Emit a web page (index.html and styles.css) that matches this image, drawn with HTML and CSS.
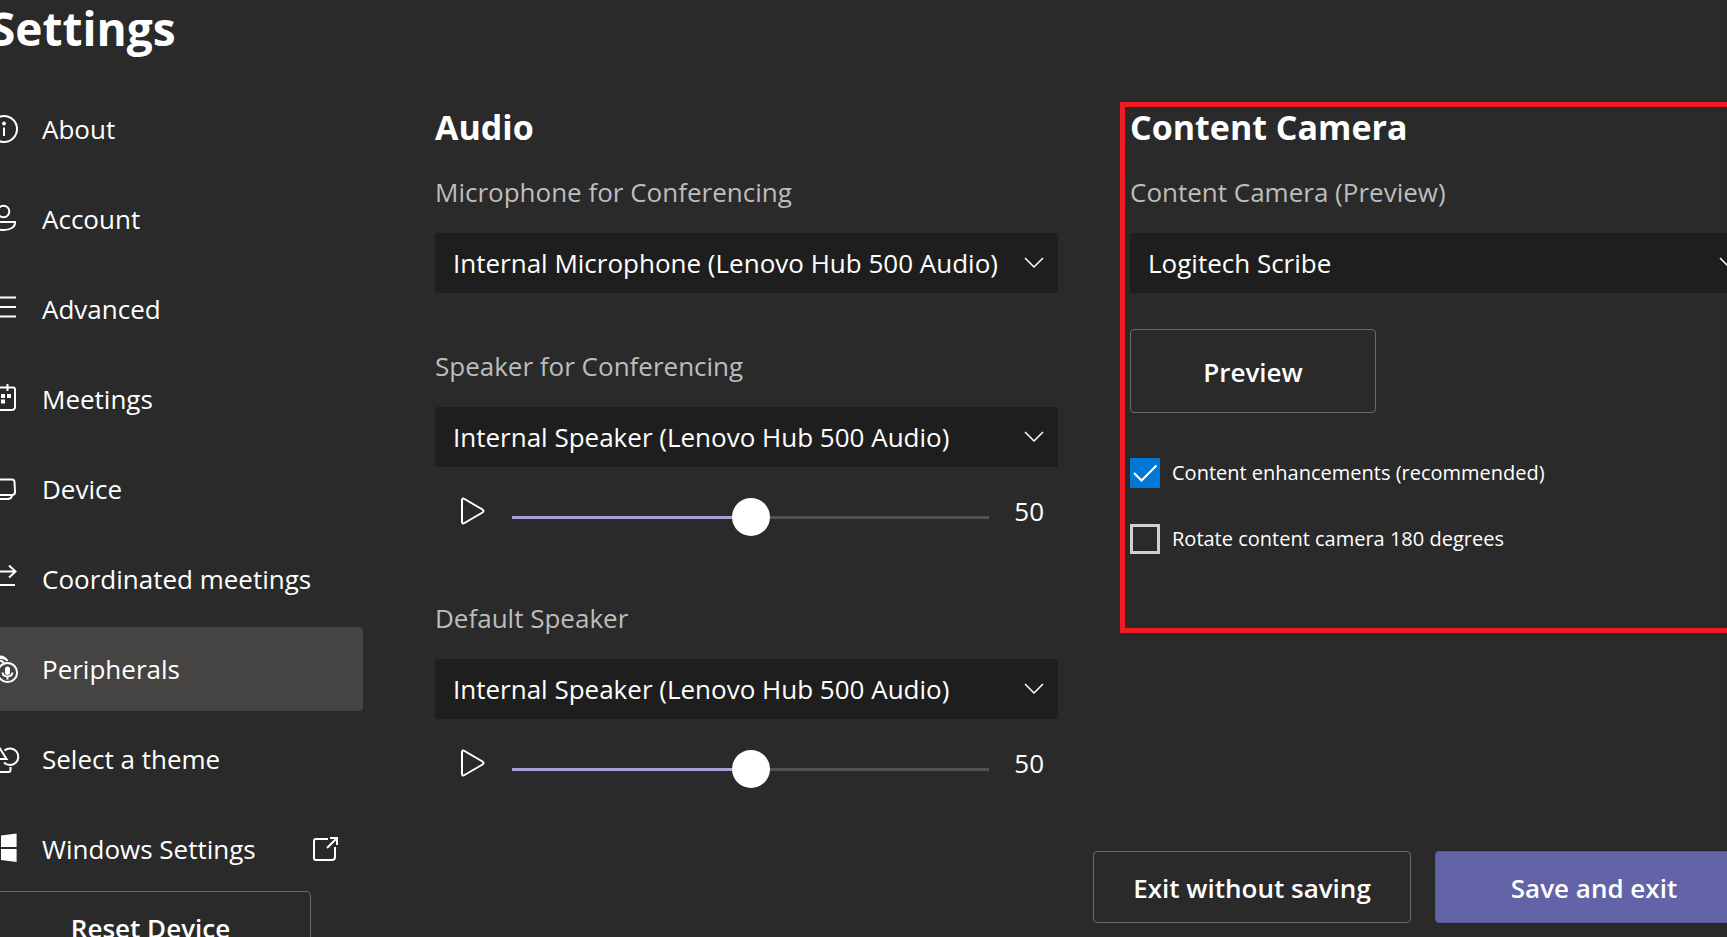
FILE: index.html
```html
<!DOCTYPE html>
<html lang="en">
<head>
<meta charset="utf-8">
<title>Settings</title>
<link rel="stylesheet" href="styles.css">
</head>
<body>
<div class="app">
  <aside class="sidebar">
    <h1 class="page-title">Settings</h1>
    <nav class="nav">
      <a class="nav-item" href="#about"><svg class="icon" viewBox="0 0 28 28"><circle cx="14" cy="14" r="13"/><path d="M14 12.500V21"/><circle class="solid" cx="14" cy="8.500" r="1.900"/></svg>About</a>
      <a class="nav-item" href="#account"><svg class="icon" viewBox="0 0 28 28"><circle cx="13.500" cy="6.500" r="5.800"/><path d="M2 17H25V18C25 22 20.500 25 13.500 25S2 22 2 18Z"/></svg>Account</a>
      <a class="nav-item" href="#advanced"><svg class="icon" viewBox="0 0 28 28"><path d="M1 2.500H26M1 12H26M1 21.500H26"/></svg>Advanced</a>
      <a class="nav-item" href="#meetings"><svg class="icon" viewBox="0 0 28 28"><path d="M4 2.500H23Q25 2.500 25 4.500V22Q25 25 21 25H5Q2 25 2 22V4.500Q2 2.500 4 2.500ZM17.500-1V6M8.500-1V6"/><path class="solid" d="M11 9H15V13H11ZM17 9H21V13H17ZM11 14.500H15V18.500H11ZM5 9H9V13H5ZM5 14.500H9V18.500H5Z"/></svg>Meetings</a>
      <a class="nav-item" href="#device"><svg class="icon" viewBox="0 0 28 28"><path d="M3 4.500H22Q24.500 4.500 24.500 7L25 17Q25 20 22 20H3Q1 20 1 18V7Q1 4.500 3 4.500ZM22 20Q22 24 17 24H4"/></svg>Device</a>
      <a class="nav-item" href="#coordinated"><svg class="icon" viewBox="0 0 28 28"><path d="M1 6.500H25M19 .5L25.500 6.500L19 12.500M25 20H1M7 14L1 20L7 26"/></svg>Coordinated meetings</a>
      <a class="nav-item nav-item-active" href="#peripherals" aria-current="page"><svg class="icon" viewBox="0 0 28 28"><circle cx="17.500" cy="17.500" r="9.600"/><path d="M1 12A10 10 0 0 1 17.500 5.500M7 2A9.500 9.500 0 0 1 17.500 6M10 5.500L14 7.500M12.500 17.500Q13 21.500 17.500 21.500T22.500 17.500M17.500 21.500V24.500"/><rect class="solid" x="15" y="11.500" width="5" height="8.500" rx="2.500"/></svg>Peripherals</a>
      <a class="nav-item" href="#theme"><svg class="icon" viewBox="0 0 28 28"><path d="M14.500 5.500A8.300 8.300 0 1 1 14 17.500M9 2L16.500 14H1.500ZM20.500 22V25Q20.500 27 18.500 27H6V18"/></svg>Select a theme</a>
      <a class="nav-item" href="#windows"><svg class="icon" viewBox="0 0 28 28"><path class="solid" d="M11 .5L26.600-1.500V12H11ZM11 14H26.600V27L11 25ZM0 2L9 1V12H0ZM0 14H9V25L0 24Z"/></svg>Windows Settings<svg class="icon icon-external" viewBox="0 0 28 28"><path d="M17 4H5Q3 4 3 6V23Q3 25 5 25H21Q24 25 24 22V12M16 13L26 3M19 3H26V10"/></svg></a>
    </nav>
    <button class="button button-reset" type="button">Reset Device</button>
  </aside>

  <main class="main">
    <div class="columns">
      <section class="panel">
        <h2 class="panel-title">Audio</h2>
        <div class="group">
          <label class="label" for="mic">Microphone for Conferencing</label>
          <div class="select-box">
            <select class="select" id="mic"><option>Internal Microphone (Lenovo Hub 500 Audio)</option></select>
            <svg class="chevron" viewBox="0 0 20 12"><path d="M1 1L10 10L19 1"/></svg>
          </div>
        </div>
        <div class="group">
          <label class="label" for="speaker">Speaker for Conferencing</label>
          <div class="select-box">
            <select class="select" id="speaker"><option>Internal Speaker (Lenovo Hub 500 Audio)</option></select>
            <svg class="chevron" viewBox="0 0 20 12"><path d="M1 1L10 10L19 1"/></svg>
          </div>
          <div class="volume">
            <button class="play" type="button" aria-label="Test speaker"><svg class="icon-play" viewBox="0 0 26 28"><path d="M2 3.500Q2 .500 4.500 2L22.500 12.500Q24.500 14 22.500 15.500L4.500 26Q2 27.500 2 24.500Z"/></svg></button>
            <input class="slider" type="range" min="0" max="100" value="50" id="speaker-volume" aria-label="Speaker volume">
            <output class="value" for="speaker-volume">50</output>
          </div>
        </div>
        <div class="group">
          <label class="label" for="default">Default Speaker</label>
          <div class="select-box">
            <select class="select" id="default"><option>Internal Speaker (Lenovo Hub 500 Audio)</option></select>
            <svg class="chevron" viewBox="0 0 20 12"><path d="M1 1L10 10L19 1"/></svg>
          </div>
          <div class="volume">
            <button class="play" type="button" aria-label="Test default speaker"><svg class="icon-play" viewBox="0 0 26 28"><path d="M2 3.500Q2 .500 4.500 2L22.500 12.500Q24.500 14 22.500 15.500L4.500 26Q2 27.500 2 24.500Z"/></svg></button>
            <input class="slider" type="range" min="0" max="100" value="50" id="default-volume" aria-label="Default speaker volume">
            <output class="value" for="default-volume">50</output>
          </div>
        </div>
      </section>

      <section class="panel panel-marked">
        <h2 class="panel-title">Content Camera</h2>
        <div class="group">
          <label class="label" for="camera">Content Camera (Preview)</label>
          <div class="select-box">
            <select class="select" id="camera"><option>Logitech Scribe</option></select>
            <svg class="chevron" viewBox="0 0 20 12"><path d="M1 1L10 10L19 1"/></svg>
          </div>
        </div>
        <button class="button button-preview" type="button">Preview</button>
        <div class="checks">
          <label class="check"><span class="check-box"><input class="check-input" type="checkbox" checked><svg class="tick" viewBox="0 0 30 30"><path d="M4 15L11.500 22.500L26.500 7.500"/></svg></span>Content enhancements (recommended)</label>
          <label class="check"><span class="check-box"><input class="check-input" type="checkbox"><svg class="tick" viewBox="0 0 30 30"><path d="M4 15L11.500 22.500L26.500 7.500"/></svg></span>Rotate content camera 180 degrees</label>
        </div>
      </section>
    </div>
    <footer class="footer">
      <button class="button button-footer" type="button">Exit without saving</button>
      <button class="button button-footer button-primary" type="submit">Save and exit</button>
    </footer>
  </main>
</div>
</body>
</html>
```

FILE: styles.css
```css
* {
  box-sizing: border-box;
}

body {
  margin: 0;
  height: 100vh;
  overflow: hidden;
  background: #2a2a2a;
  color: #fff;
  font: 26px/36px "Open Sans", "Noto Sans", sans-serif;
}

/* The window is slightly narrower than the panel it shows. */
.app {
  display: flex;
  gap: 72px;
  height: 100vh;
  margin: 0 -26px 0 -10px;
}

.sidebar {
  flex: 0 0 373px;
}

.page-title {
  margin: 0;
  height: 84px;
  font-size: 46px;
  font-weight: 700;
  line-height: 56px;
}

.nav {
  display: flex;
  flex-direction: column;
  gap: 6px;
  padding-top: 3px;
}

.nav-item {
  display: flex;
  align-items: center;
  gap: 24px;
  height: 84px;
  border-radius: 4px;
  color: #fff;
  line-height: 38px;
  text-decoration: none;
}

.nav-item-active {
  background: #454442;
}

.icon {
  flex: none;
  width: 28px;
  height: 28px;
  overflow: visible;
  fill: none;
  stroke: #fff;
  stroke-width: 2;
}

.icon .solid {
  fill: #fff;
  stroke: none;
}

.icon-external {
  margin-left: auto;
  margin-right: 24px;
}

.button {
  display: block;
  height: 72px;
  padding: 2px 16px 0;
  border: 1px solid #6a6a6a;
  border-radius: 4px;
  background: transparent;
  color: #fff;
  font: inherit;
  font-weight: 600;
}

.button-reset {
  width: 321px;
}

.main {
  display: flex;
  flex: 1;
  flex-direction: column;
  min-width: 0;
  padding: 102px 0 14px;
}

.columns {
  display: grid;
  grid-template-columns: 1fr 1fr;
  gap: 72px;
  align-items: start;
}

.panel {
  padding-top: 2px;
  min-width: 0;
}

.panel-marked {
  margin: 0 -10px;
  padding: 0 5px 74px;
  border: 5px solid #ed1c24;
}

.panel-title {
  margin: 0;
  font-size: 34px;
  font-weight: 700;
  line-height: 46px;
}

.panel-marked .panel-title {
  margin-top: -3px;
}

.group {
  display: flex;
  flex-direction: column;
  padding-top: 24px;
}

.group + .group {
  padding-top: 55px;
}

.label {
  margin-bottom: 23px;
  color: #bdbdbd;
}

.select-box {
  display: grid;
  align-items: center;
}

.select,
.chevron {
  grid-area: 1 / 1;
}

.select {
  appearance: none;
  width: 100%;
  height: 60px;
  padding: 0 60px 0 18px;
  border: 0;
  border-radius: 3px;
  background: #1e1e1e;
  color: #fff;
  font: inherit;
}

.chevron {
  justify-self: end;
  width: 20px;
  height: 12px;
  margin-right: 14px;
  fill: none;
  stroke: #fff;
  stroke-width: 1.5;
  pointer-events: none;
}

.volume {
  display: flex;
  align-items: center;
  height: 44px;
  margin: 22px 0 12px;
  padding: 0 14px 0 25px;
}

.play {
  display: flex;
  margin-right: 26px;
  padding: 0;
  border: 0;
  background: none;
}

.icon-play {
  width: 26px;
  height: 28px;
  fill: none;
  stroke: #fff;
  stroke-width: 2;
}

.slider {
  appearance: none;
  flex: 1;
  min-width: 0;
  height: 38px;
  margin: 12px 25px 0 0;
  background: linear-gradient(90deg, #a6a2d8 50%, #525252 50%) center / 100% 3px no-repeat;
}

.slider::-webkit-slider-thumb {
  appearance: none;
  width: 38px;
  height: 38px;
  border-radius: 50%;
  background: #fff;
}

.value {
  line-height: 38px;
}

.button-preview {
  width: 246px;
  height: 84px;
  margin-top: 36px;
}

.checks {
  display: flex;
  flex-direction: column;
  gap: 36px;
  margin-top: 45px;
}

.check {
  display: flex;
  align-items: center;
  gap: 12px;
  font-size: 20px;
  line-height: 30px;
}

.check-box {
  display: grid;
}

.check-input,
.tick {
  grid-area: 1 / 1;
  width: 30px;
  height: 30px;
}

.check-input {
  appearance: none;
  margin: 0;
  border: 3px solid #d0d0d0;
}

.check-input:checked {
  border: 0;
  background: #0078d7;
}

.tick {
  visibility: hidden;
  fill: none;
  stroke: #fff;
  stroke-width: 2;
  pointer-events: none;
}

.check-input:checked + .tick {
  visibility: visible;
}

.footer {
  display: flex;
  justify-content: flex-end;
  gap: 24px;
  margin-top: auto;
}

.button-footer {
  width: 318px;
}

.button-primary {
  border-color: #5558a0;
  background: #6264a7;
}
```
